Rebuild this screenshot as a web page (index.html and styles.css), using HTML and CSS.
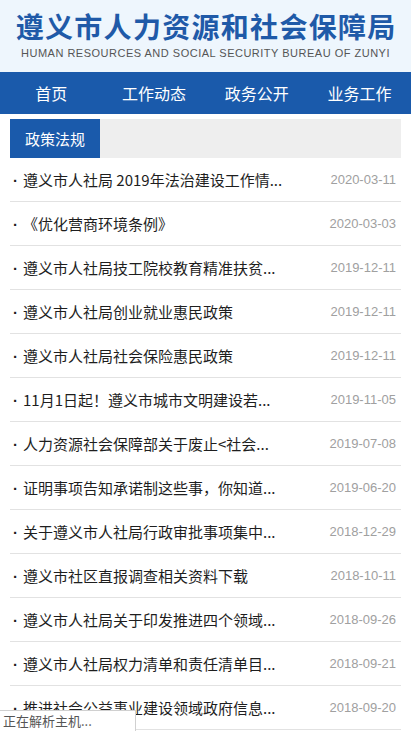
FILE: index.html
```html
<!DOCTYPE html>
<html lang="zh-CN">
<head>
<meta charset="utf-8">
<title>政策法规 - 遵义市人力资源和社会保障局</title>
<link rel="stylesheet" href="styles.css">
</head>
<body>
<header class="hd">
  <div class="hd-title">遵义市人力资源和社会保障局</div>
  <div class="hd-sub">HUMAN RESOURCES AND SOCIAL SECURITY BUREAU OF ZUNYI</div>
</header>
<nav class="nav">
  <a class="nav-item">首页</a>
  <a class="nav-item">工作动态</a>
  <a class="nav-item">政务公开</a>
  <a class="nav-item">业务工作</a>
</nav>
<main class="wrap">
  <div class="tabbar"><div class="tab">政策法规</div></div>
  <ul class="list">
    <li class="row"><span class="t"><span class="dot">·</span>遵义市人社局 2019年法治建设工作情...</span><span class="d">2020-03-11</span></li>
    <li class="row"><span class="t"><span class="dot">·</span>《优化营商环境条例》</span><span class="d">2020-03-03</span></li>
    <li class="row"><span class="t"><span class="dot">·</span>遵义市人社局技工院校教育精准扶贫...</span><span class="d">2019-12-11</span></li>
    <li class="row"><span class="t"><span class="dot">·</span>遵义市人社局创业就业惠民政策</span><span class="d">2019-12-11</span></li>
    <li class="row"><span class="t"><span class="dot">·</span>遵义市人社局社会保险惠民政策</span><span class="d">2019-12-11</span></li>
    <li class="row"><span class="t"><span class="dot">·</span>11月1日起！遵义市城市文明建设若...</span><span class="d">2019-11-05</span></li>
    <li class="row"><span class="t"><span class="dot">·</span>人力资源社会保障部关于废止&lt;社会...</span><span class="d">2019-07-08</span></li>
    <li class="row"><span class="t"><span class="dot">·</span>证明事项告知承诺制这些事，你知道...</span><span class="d">2019-06-20</span></li>
    <li class="row"><span class="t"><span class="dot">·</span>关于遵义市人社局行政审批事项集中...</span><span class="d">2018-12-29</span></li>
    <li class="row"><span class="t"><span class="dot">·</span>遵义市社区直报调查相关资料下载</span><span class="d">2018-10-11</span></li>
    <li class="row"><span class="t"><span class="dot">·</span>遵义市人社局关于印发推进四个领域...</span><span class="d">2018-09-26</span></li>
    <li class="row"><span class="t"><span class="dot">·</span>遵义市人社局权力清单和责任清单目...</span><span class="d">2018-09-21</span></li>
    <li class="row"><span class="t"><span class="dot">·</span>推进社会公益事业建设领域政府信息...</span><span class="d">2018-09-20</span></li>
  </ul>
</main>
<div class="status">正在解析主机...</div>
</body>
</html>
```

FILE: styles.css
```css
html, body {
  margin: 0;
  padding: 0;
  background: #ffffff;
  font-family: "Liberation Sans", "Noto Sans CJK SC", sans-serif;
}
.hd {
  height: 72px;
  background: #eef6fd;
  display: flex;
  flex-direction: column;
  align-items: center;
  box-sizing: border-box;
  padding-top: 10px;
}
.hd-title {
  font-family: "Noto Sans CJK SC", sans-serif;
  font-weight: 700;
  font-size: 28px;
  line-height: 32px;
  letter-spacing: 1.3px;
  margin-right: -1.3px;
  color: #1f5aa8;
}
.hd-sub {
  font-family: "Liberation Sans", sans-serif;
  font-size: 11px;
  line-height: 14px;
  letter-spacing: 0.5px;
  color: #555555;
  margin-top: 4px;
}
.nav {
  height: 42px;
  background: #1a5aab;
  display: grid;
  grid-template-columns: repeat(4, 1fr);
}
.nav-item {
  color: #ffffff;
  font-family: "Noto Sans CJK SC", sans-serif;
  font-size: 16px;
  line-height: 42px;
  text-align: center;
}
.wrap {
  padding: 5px 10px 0;
}
.tabbar {
  height: 39px;
  background: #eeeeee;
  display: flex;
}
.tab {
  width: 90px;
  background: #1a5aab;
  color: #ffffff;
  font-family: "Noto Sans CJK SC", sans-serif;
  font-size: 15px;
  line-height: 39px;
  text-align: center;
}
.list {
  list-style: none;
  margin: 0;
  padding: 0;
}
.row {
  height: 43px;
  border-bottom: 1px solid #e2e2e2;
  display: flex;
  align-items: center;
  justify-content: space-between;
  padding: 0 5px 0 3px;
}
.t {
  font-family: "Noto Sans CJK SC", sans-serif;
  font-size: 15px;
  color: #1e1e1e;
  white-space: nowrap;
  overflow: hidden;
}
.dot {
  display: inline-block;
  width: 10px;
  font-family: "Liberation Sans", sans-serif;
  font-weight: 700;
}
.d {
  font-family: "Liberation Sans", sans-serif;
  font-size: 13px;
  color: #a0a0a0;
  flex: none;
}
.status {
  position: fixed;
  left: 0;
  bottom: 0;
  width: 132px;
  height: 20px;
  background: #ffffff;
  border-top: 1px solid #d0d0d0;
  border-right: 1px solid #d0d0d0;
  font-family: "Noto Sans CJK SC", sans-serif;
  font-size: 13px;
  line-height: 20px;
  color: #555555;
  padding-left: 3px;
}
```
